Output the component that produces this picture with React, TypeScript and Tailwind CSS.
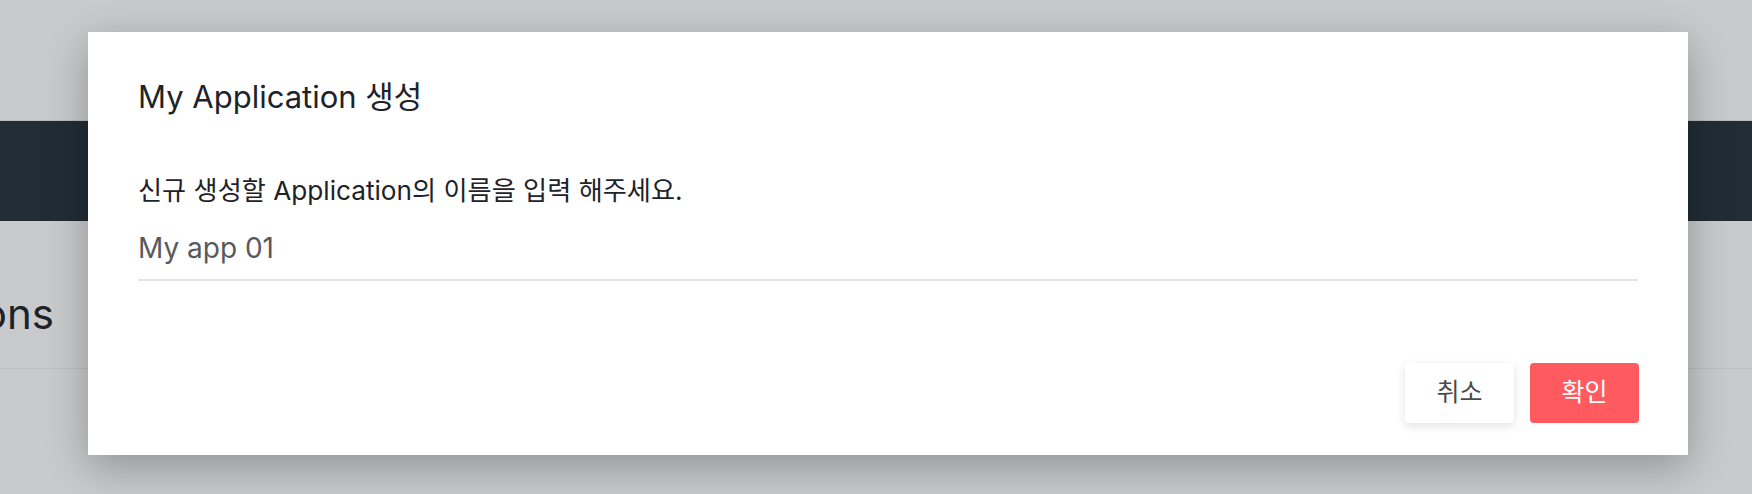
// 앱 생성 모달: 뒤 페이지는 딤 처리된 색으로 그린다.
import { useState } from "react";

const FONT = { fontFamily: 'Inter, "Noto Sans CJK KR", "Noto Sans", sans-serif' };

function BackgroundPage() {
  return (
    <div className="flex h-[494px] w-full flex-col bg-[#c9cacc]">
      <div className="h-[121px] border-b border-[#b9babc]" />
      <div className="h-[100px] bg-[#212c35]" />
      <div className="flex h-[148px] items-center border-b border-[#bcbdbf] pt-[38px]">
        {/* 페이지 제목: 모달 뒤로 "ons" 만 보인다 */}
        <div className="flex w-[54px] justify-end whitespace-nowrap">
          <span className="text-[42px] text-[#1c232a]">Applications</span>
        </div>
      </div>
    </div>
  );
}

function CreateAppModal() {
  const [name, setName] = useState("");

  return (
    <div className="flex w-[1600px] flex-col bg-white px-[50px] pb-[32px] pt-[47px] shadow-[0_12px_40px_rgba(0,0,0,0.28)]">
      <h2 className="text-[31px] leading-[36px] text-[#1d2329]">My Application 생성</h2>
      <p className="mt-[60px] text-[26.2px] leading-[32px] text-[#1d2329]">
        신규 생성할 Application의 이름을 입력 해주세요.
      </p>
      <input
        value={name}
        onChange={(e) => setName(e.target.value)}
        placeholder="My app 01"
        className="mt-[23px] h-[51px] w-full border-b-2 border-[#e6e6e6] pb-[13px] text-[28px] leading-[36px] text-[#555a5e] placeholder:text-[#555a5e] focus:outline-none"
        style={FONT}
      />
      <div className="-mr-[1px] mt-[82px] flex justify-end gap-[16px]">
        <button className="h-[60px] w-[109px] rounded-[4px] bg-white text-[25px] text-[#4a4a4a] shadow-[0_3px_10px_rgba(0,0,0,0.12)]">
          취소
        </button>
        <button className="h-[60px] w-[109px] rounded-[4px] bg-[#ff5a5f] text-[25px] text-white">
          확인
        </button>
      </div>
    </div>
  );
}

export default function App() {
  return (
    <div className="relative h-[494px] w-[1752px] overflow-hidden" style={FONT}>
      <BackgroundPage />
      <div className="absolute left-[88px] top-[32px]">
        <CreateAppModal />
      </div>
    </div>
  );
}
